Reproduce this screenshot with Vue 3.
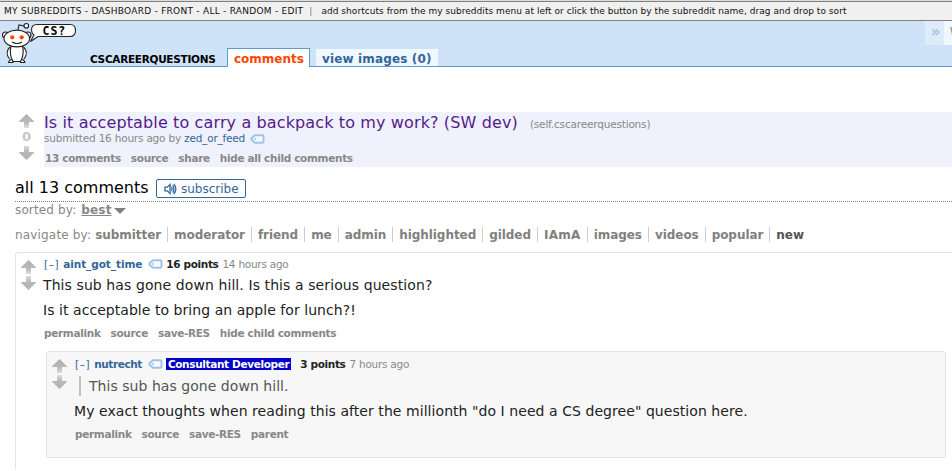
<script setup>
import { h } from 'vue'

const shortcuts = 'MY SUBREDDITS - DASHBOARD - FRONT - ALL - RANDOM - EDIT'
const filters = ['submitter', 'moderator', 'friend', 'me', 'admin', 'highlighted', 'gilded', 'IAmA', 'images', 'videos', 'popular', 'new']

const Arrow = (props) =>
  h('svg', { class: ['arrow', { down: props.down }], width: 15, height: 14, viewBox: '0 0 15 14' }, [
    h('path', { d: 'M7.5 0L15 7.3V8H10V14H5V8H0V7.3Z', fill: 'url(#arrow-fade)' }),
  ])
Arrow.props = { down: Boolean }

const Tag = () =>
  h('svg', { class: 'tag', width: 15, height: 10, viewBox: '0 0 15 10' }, [
    h('path', { d: 'M5 1.2H12.3Q13.5 1.2 13.5 2.4V7.6Q13.5 8.8 12.3 8.8H5L1.5 5.8V4.2Z', fill: '#f4f9ff', stroke: '#9fc3e8', 'stroke-width': 2 }),
    h('circle', { cx: 5, cy: 5, r: 1, fill: '#9fc3e8' }),
  ])
</script>

<template>
  <div class="page">
    <svg class="defs" width="0" height="0">
      <defs>
        <linearGradient id="arrow-fade" x1="0" y1="0" x2="0" y2="1">
          <stop offset="0" stop-color="#b0b0b0" />
          <stop offset=".6" stop-color="#b9b9b9" />
          <stop offset="1" stop-color="#dddddd" />
        </linearGradient>
      </defs>
    </svg>
    <div class="shortcuts">
      <span class="short-links">{{ shortcuts }}</span>
      <span class="short-bar">|</span>
      <span class="short-hint">add shortcuts from the my subreddits menu at left or click the button by the subreddit name, drag and drop to sort</span>
    </div>
    <header class="header">
      <svg class="logo" width="78" height="46" viewBox="0 0 78 46">
        <g fill="#fff" stroke="#222" stroke-width="1.1">
          <path d="M17.5 11L19 4L24 5" fill="none" />
          <circle cx="26.3" cy="4.8" r="2.3" />
          <circle cx="5.5" cy="14" r="3" />
          <circle cx="28" cy="14" r="3" />
          <path d="M10 26Q4.5 31 9.5 38M23.5 26Q29 31 24 38" />
          <path d="M8.5 41.5Q9 38.5 13 38.5V41.5ZM25 41.5Q24.5 38.5 20.5 38.5V41.5Z" />
          <path d="M11 25H22.5Q24.5 33 20.5 40.5H13Q9 33 11 25Z" />
          <ellipse cx="16.8" cy="17.5" rx="12.8" ry="8.4" />
          <path d="M12 21Q17 24 22 21" fill="none" />
          <path d="M37 3.5H70Q75.5 3.5 75.5 9.5T70 15.5H38L30.5 20.5L34 14Q31.5 12 31.5 9Q31.5 3.5 37 3.5Z" />
        </g>
        <g fill="#ff4500"><circle cx="12.2" cy="16.3" r="2.1" /><circle cx="21.7" cy="16.3" r="2.1" /></g>
        <text x="42.5" y="13.5" class="speech">CS?</text>
      </svg>
      <span class="subreddit">CSCAREERQUESTIONS</span>
      <span class="tab active">comments</span>
      <span class="tab images">view images (0)</span>
      <div class="user"><span class="chevron">»</span><span class="user-name">W</span></div>
    </header>

    <section class="link">
      <div class="votes"><Arrow /><b>0</b><Arrow down /></div>
      <div class="entry">
        <div class="title-row"><a class="title">Is it acceptable to carry a backpack to my work? (SW dev)</a><span class="domain">(self.cscareerquestions)</span></div>
        <div class="byline"><span>submitted 16 hours ago by <a>zed_or_feed</a></span><Tag /></div>
        <div class="buttons"><span>13 comments</span><span>source</span><span>share</span><span>hide all child comments</span></div>
      </div>
    </section>

    <div class="all-row">
      <span class="all">all 13 comments</span>
      <button class="subscribe">
        <svg width="13" height="12" viewBox="0 0 14 12" fill="none" stroke="#336699" stroke-width="1.4">
          <path d="M1 4H3.5L6.5 1.2V10.8L3.5 8H1Z" /><path d="M8 4Q9.2 6 8 8M9.3 2Q12 6 9.3 10M10.6 .6Q15 6 10.6 11.4" />
        </svg>
        <span>subscribe</span>
      </button>
    </div>
    <div class="sort-row"><span>sorted by:</span><b>best</b><i class="caret"></i></div>
    <nav class="navigate"><span class="nav-label">navigate by:</span><b v-for="f in filters" :key="f" :class="{ current: f === 'new', caps: f === 'IAmA' }">{{ f }}</b></nav>

    <article class="comment">
      <div class="votes"><Arrow /><Arrow down /></div>
      <div class="body">
        <div class="tagline"><span class="fold">[–]</span><b class="author first">aint_got_time</b><Tag /><b class="points">16 points</b><span class="age">14 hours ago</span></div>
        <p class="p1">This sub has gone down hill. Is this a serious question?</p>
        <p class="p2">Is it acceptable to bring an apple for lunch?!</p>
        <div class="buttons"><span>permalink</span><span>source</span><span>save-RES</span><span>hide child comments</span></div>
        <article class="comment child">
          <div class="votes"><Arrow /><Arrow down /></div>
          <div class="body">
            <div class="tagline"><span class="fold">[–]</span><b class="author">nutrecht</b><Tag /><b class="flair">Consultant Developer</b><b class="points">3 points</b><span class="age">7 hours ago</span></div>
            <blockquote>This sub has gone down hill.</blockquote>
            <p class="p3">My exact thoughts when reading this after the millionth "do I need a CS degree" question here.</p>
            <div class="buttons"><span>permalink</span><span>source</span><span>save-RES</span><span>parent</span></div>
          </div>
        </article>
      </div>
    </article>
  </div>
</template>

<style>
body { margin: 0; background: #fff; overflow: hidden; }
</style>

<style scoped>
.page { width: 952px; height: 471px; overflow: hidden; font-family: "DejaVu Sans", sans-serif; font-size: 11px; color: #888; white-space: nowrap; }
.page * { box-sizing: border-box; }
.defs { display: block; }
.shortcuts { display: flex; height: 21px; border-top: 1px solid #ddd; border-bottom: 1px solid #808080; background: #f0f0f0; box-shadow: inset 0 1px #808080; padding-left: 4px; font-size: 9px; line-height: 20px; color: #111; }
.short-links { letter-spacing: .26px; }
.short-hint { letter-spacing: .04px; }
.short-bar { margin: 0 9px 0 6px; color: #777; }
.header { display: flex; align-items: flex-end; height: 46px; background: #cee3f8; border-bottom: 1px solid #5f99cf; position: relative; }
.logo { flex: none; width: 78px; height: 46px; margin-bottom: -1px; }
.speech { font: bold 11.5px "DejaVu Sans Mono", monospace; fill: #000; letter-spacing: 1px; }
.subreddit { width: 149px; padding-left: 12px; font-size: 10.5px; letter-spacing: -.29px; font-weight: bold; line-height: 14px; color: #000; }
.tab { font-size: 12px; font-weight: bold; line-height: 20px; height: 17px; color: #336699; background: #eff7ff; }
.tab.active { width: 83px; height: 19px; padding-left: 6px; margin-bottom: -1px; border: 1px solid #5f99cf; border-bottom: 0; background: #fff; color: #ff4500; }
.tab.images { width: 122px; margin-left: 6px; padding-left: 6px; letter-spacing: .14px; }
.user { display: flex; align-self: flex-start; height: 24px; width: 27px; margin-left: auto; background: #eff7ff; overflow: hidden; }
.chevron { flex: none; width: 19px; background: #deebf8; border-radius: 3px 0 3px 0; text-align: center; font-size: 15px; font-weight: bold; line-height: 22px; color: #a5c3e2; padding-left: 2px; }
.user-name { padding-left: 6px; font-size: 10px; line-height: 21px; color: #777; }
.link { display: flex; height: 55px; margin: 45px 0 10px 19px; }
.votes { flex: none; display: flex; flex-direction: column; align-items: center; width: 15px; }
.arrow { display: block; flex: none; }
.down { transform: rotate(180deg); }
.link .votes { padding-top: 2px; margin-right: 10px; }
.link .votes b { color: #c6c6c6; font-size: 13px; line-height: 18px; }
.entry { flex: 1; background: #eff2fc; }
.title-row { height: 20px; line-height: 21px; }
.title { font-size: 16px; color: #551a8b; letter-spacing: .125px; }
.domain { font-size: 10.5px; margin-left: 12px; letter-spacing: -.18px; }
.byline { display: flex; align-items: center; gap: 5px; height: 13px; font-size: 10.5px; line-height: 13px; letter-spacing: -.2px; }
.byline a { color: #336699; }
.entry .buttons { padding-top: 6px; }
.buttons { display: flex; gap: 10px; padding-left: 1px; font-size: 10.5px; line-height: 14px; font-weight: bold; letter-spacing: -.33px; }
.all-row { display: flex; height: 26px; margin-left: 15px; border-bottom: 1px dotted #808080; line-height: 24px; margin-top: -1px; }
.all { font-size: 16px; color: #000; width: 141px; }
.subscribe { display: flex; align-items: center; gap: 4px; width: 90px; height: 19px; margin-top: 3px; padding: 0 0 0 7px; border: 1px solid #336699; border-radius: 2px; background: #fff; font: 12px "DejaVu Sans", sans-serif; color: #336699; }
.sort-row { display: flex; align-items: center; height: 17px; margin-left: 15px; font-size: 12px; line-height: 17px; letter-spacing: .14px; }
.sort-row b { margin-left: 5px; text-decoration: underline; }
.caret { border: 6px solid transparent; border-top-color: #808080; border-bottom: 0; margin-left: 2px; }
.navigate { display: flex; height: 15px; margin: 8px 0 0 15px; font-size: 12px; line-height: 16px; }
.nav-label { margin-right: 4px; letter-spacing: .17px; }
.navigate b { padding-right: 6px; margin-right: 6px; border-right: 1px solid #ccc; color: #808080; letter-spacing: -.06px; }
.navigate b.current { border: 0; color: #555; }
.navigate b.caps { letter-spacing: .3px; }
.comment { display: flex; border: 1px solid #e4e4e4; border-radius: 3px; }
.page > .comment { width: 960px; height: 219px; margin: 10px 0 0 15px; border-bottom-color: #fff; padding: 7px 0 0 5px; }
.comment .votes { gap: 2px; }
.body { flex: 1; padding-left: 7px; }
.tagline { display: flex; align-items: center; height: 10px; font-size: 10.5px; line-height: 10px; margin-top: -1px; margin-bottom: 6px; }
.child .tagline { margin-top: 0; margin-bottom: 7px; }
.tagline .tag { margin: 0 3px 0 6px; }
.fold { color: #336699; padding-left: 1px; margin-right: 4px; letter-spacing: .6px; }
.author { color: #336699; letter-spacing: -.42px; }
.author.first { letter-spacing: -.08px; }
.points { color: #222; margin-right: 4px; letter-spacing: -.36px; }
.age { letter-spacing: -.25px; }
p { margin: 0; font-size: 14px; color: #222; }
.p1 { line-height: 20px; letter-spacing: .09px; }
.p2 { line-height: 20px; margin-top: 5px; letter-spacing: .05px; }
.p3 { line-height: 20px; margin-top: 5px; letter-spacing: .058px; }
.body > .buttons { margin-top: 6px; }
.comment.child { width: 900px; height: 107px; margin: 11px 0 0 3px; padding: 7px 0 0 5px; background: #f7f7f7; }
.flair { height: 12px; padding: 0 2px; margin: 0 9px 0 0; background: #0000c8; color: #fff; line-height: 12px; letter-spacing: -.35px; }
blockquote { height: 20px; margin: 0 0 0 5px; padding-left: 8px; border-left: 2px solid #c5c1ad; font-size: 14px; line-height: 20px; color: #555; letter-spacing: .04px; }
</style>
